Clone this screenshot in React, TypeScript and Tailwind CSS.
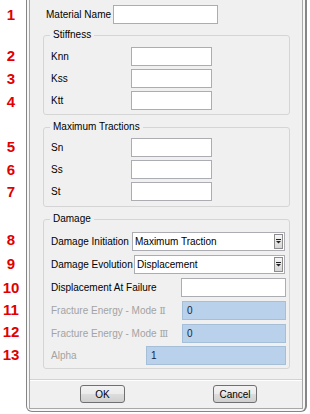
import React from 'react'

function TextBox({ className = '' }: { className?: string }) {
  return <div className={`h-[19px] border border-[#abadb3] bg-white ${className}`} />
}

function BlueBox({ className = '', value }: { className?: string; value: string }) {
  return (
    <div className={`flex h-[19px] items-center border border-[#a6bfd9] bg-[#b9d1ea] pl-[4px] text-[#16243a] ${className}`}>
      {value}
    </div>
  )
}

function Combo({ className = '', value }: { className?: string; value: string }) {
  return (
    <div className={`flex h-[19px] items-center border border-[#abadb3] bg-white pl-[2px] pr-[1px] ${className}`}>
      <span className="flex-1">{value}</span>
      <span className="flex h-[15px] w-[9px] items-center justify-center border border-[#8c8c8c] bg-gradient-to-b from-[#f6f6f6] to-[#d6d6d6]">
        <svg width="5" height="5" viewBox="0 0 5 5">
          <rect x="0" y="0" width="5" height="1" fill="#222" />
          <path d="M0 2h5L2.5 4.6z" fill="#222" />
        </svg>
      </span>
    </div>
  )
}

function Group({ title, className = '', children }: { title: string; className?: string; children: React.ReactNode }) {
  return (
    <div className={`relative ml-[13px] flex w-[247px] flex-col rounded-[3px] border border-[#d5d5d5] pl-[7px] ${className}`}>
      <span className="absolute left-[6px] top-[-7px] bg-[#f0f0f0] px-[3px] leading-[12px]">{title}</span>
      {children}
    </div>
  )
}

function Btn({ label, className = '' }: { label: string; className?: string }) {
  return (
    <div
      className={`flex h-[18px] items-center justify-center rounded-[3px] border border-[#707070] bg-[linear-gradient(#f2f2f2,#ebebeb_50%,#dddddd_50%,#cfcfcf)] ${className}`}
    >
      {label}
    </div>
  )
}

export default function App() {
  return (
    <div className="flex h-[414px] w-[310px] bg-white font-['Liberation_Sans',Arial,sans-serif] text-[10px] text-black">
      {/* Row numbers */}
      <div className="flex w-[26px] flex-col text-[15px] font-bold leading-[18px] text-[#e00000]">
        <div className="mt-[6px] w-[22px] text-center">1</div>
        <div className="mt-[23px] w-[22px] text-center">2</div>
        <div className="mt-[5px] w-[22px] text-center">3</div>
        <div className="mt-[5px] w-[22px] text-center">4</div>
        <div className="mt-[27px] w-[22px] text-center">5</div>
        <div className="mt-[5px] w-[22px] text-center">6</div>
        <div className="mt-[4px] w-[22px] text-center">7</div>
        <div className="mt-[30px] w-[22px] text-center">8</div>
        <div className="mt-[6px] w-[22px] text-center">9</div>
        <div className="mt-[6px] w-[22px] text-center">10</div>
        <div className="mt-[4px] w-[22px] text-center">11</div>
        <div className="mt-[4px] w-[22px] text-center">12</div>
        <div className="mt-[5px] w-[22px] text-center">13</div>
      </div>

      {/* Dialog frame */}
      <div className="h-[412px] w-[281px] rounded-b-[6px] border-b border-l border-r-2 border-[#858585] bg-[#f7f7f7] px-[2px] pb-[2px]">
        <div className="flex h-[409px] flex-col border-b border-l border-r border-[#a8a8a8] bg-[#f0f0f0]">
          <div className="mt-[5px] flex h-[19px] items-center pl-[16px]">
            <span className="w-[67px]">Material Name</span>
            <TextBox className="w-[105px]" />
          </div>

          <Group title="Stiffness" className="mt-[11px] gap-[3px] pb-[4px] pt-[11px]">
            <div className="flex h-[19px] items-center">
              <span className="w-[80px]">Knn</span>
              <TextBox className="w-[81px]" />
            </div>
            <div className="flex h-[19px] items-center">
              <span className="w-[80px]">Kss</span>
              <TextBox className="w-[81px]" />
            </div>
            <div className="flex h-[19px] items-center">
              <span className="w-[80px]">Ktt</span>
              <TextBox className="w-[81px]" />
            </div>
          </Group>

          <Group title="Maximum Tractions" className="mt-[12px] gap-[3px] pb-[5px] pt-[10px]">
            <div className="flex h-[19px] items-center">
              <span className="w-[80px]">Sn</span>
              <TextBox className="w-[81px]" />
            </div>
            <div className="flex h-[19px] items-center">
              <span className="w-[80px]">Ss</span>
              <TextBox className="w-[81px]" />
            </div>
            <div className="flex h-[19px] items-center">
              <span className="w-[80px]">St</span>
              <TextBox className="w-[81px]" />
            </div>
          </Group>

          <Group title="Damage" className="mt-[12px] pb-[3px] pt-[12px]">
            <div className="flex h-[19px] items-center">
              <span className="w-[81px]">Damage Initiation</span>
              <Combo className="w-[153px]" value="Maximum Traction" />
            </div>
            <div className="mt-[4px] flex h-[19px] items-center">
              <span className="w-[83px]">Damage Evolution</span>
              <Combo className="w-[151px]" value="Displacement" />
            </div>
            <div className="mt-[4px] flex h-[19px] items-center">
              <span className="w-[130px]">Displacement At Failure</span>
              <TextBox className="w-[105px]" />
            </div>
            <div className="mt-[4px] flex h-[19px] items-center">
              <span className="w-[131px] text-[#a3a3a3]">
                Fracture Energy - Mode <span className="font-['DejaVu_Serif',serif] text-[9px]">Ⅱ</span>
              </span>
              <BlueBox className="w-[104px]" value="0" />
            </div>
            <div className="mt-[4px] flex h-[19px] items-center">
              <span className="w-[131px] text-[#a3a3a3]">
                Fracture Energy - Mode <span className="font-['DejaVu_Serif',serif] text-[9px]">Ⅲ</span>
              </span>
              <BlueBox className="w-[104px]" value="0" />
            </div>
            <div className="mt-[3px] flex h-[19px] items-center">
              <span className="w-[95px] text-[#a3a3a3]">Alpha</span>
              <BlueBox className="w-[140px]" value="1" />
            </div>
          </Group>

          <div className="mt-[10px] border-b border-t border-b-white border-t-[#d2d2d2]" />

          <div className="mt-[4px] flex">
            <Btn label="OK" className="ml-[50px] w-[45px]" />
            <Btn label="Cancel" className="ml-[88px] w-[44px]" />
          </div>
        </div>
      </div>
    </div>
  )
}
